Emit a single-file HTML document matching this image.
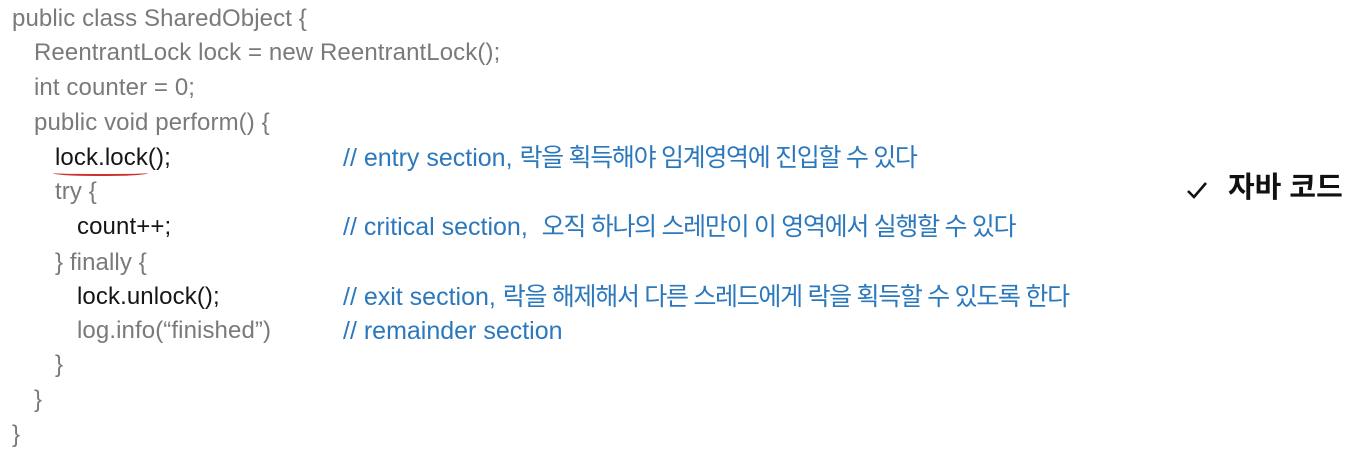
<!DOCTYPE html>
<html><head><meta charset="utf-8"><style>
html,body{margin:0;padding:0;width:1369px;height:460px;background:#fff;overflow:hidden;}
.l{position:absolute;font-family:"Liberation Sans","Noto Sans CJK KR",sans-serif;font-size:24px;line-height:28px;white-space:pre;letter-spacing:0.1px;color:#7a7a7a;}
.b{color:#151515;}
.c{color:#2b78bd;font-size:25px;letter-spacing:0px;}
.c span{letter-spacing:-1.3px;}
</style></head><body>
<div class="l" style="left:12px;top:5px">public class SharedObject {</div>
<div class="l" style="left:34px;top:39px">ReentrantLock lock = new ReentrantLock();</div>
<div class="l" style="left:34px;top:74px">int counter = 0;</div>
<div class="l" style="left:34px;top:109px">public void perform() {</div>
<div class="l b" style="left:55px;top:144px">lock.lock();</div>
<div style="position:absolute;left:53px;top:171px;width:95px;height:3px;border-bottom:2px solid #d03030;border-radius:0 0 40px 40px/0 0 3px 3px"></div>
<div class="l" style="left:55px;top:178px">try {</div>
<div class="l b" style="left:77px;top:213px">count++;</div>
<div class="l" style="left:55px;top:249px">} finally {</div>
<div class="l b" style="left:77px;top:283px">lock.unlock();</div>
<div class="l" style="left:77px;top:317px">log.info(“finished”)</div>
<div class="l" style="left:55px;top:351px">}</div>
<div class="l" style="left:34px;top:386px">}</div>
<div class="l" style="left:12px;top:421px">}</div>
<div class="l c" style="left:343px;top:144px">// entry section, <span>락을 획득해야 임계영역에 진입할 수 있다</span></div>
<div class="l c" style="left:343px;top:213px">// critical section,  <span>오직 하나의 스레만이 이 영역에서 실행할 수 있다</span></div>
<div class="l c" style="left:343px;top:283px">// exit section, <span>락을 해제해서 다른 스레드에게 락을 획득할 수 있도록 한다</span></div>
<div class="l c" style="left:343px;top:317px">// remainder section</div>
<svg style="position:absolute;left:1186px;top:180px" width="22" height="20" viewBox="0 0 22 20"><path d="M2 11 L8 17 L20 3" fill="none" stroke="#111" stroke-width="2.6"/></svg>
<div style="position:absolute;left:1228px;top:171px;font-family:'Liberation Sans','Noto Sans CJK KR',sans-serif;font-size:29px;font-weight:bold;color:#111;line-height:34px;white-space:pre">자바 코드</div>
</body></html>
